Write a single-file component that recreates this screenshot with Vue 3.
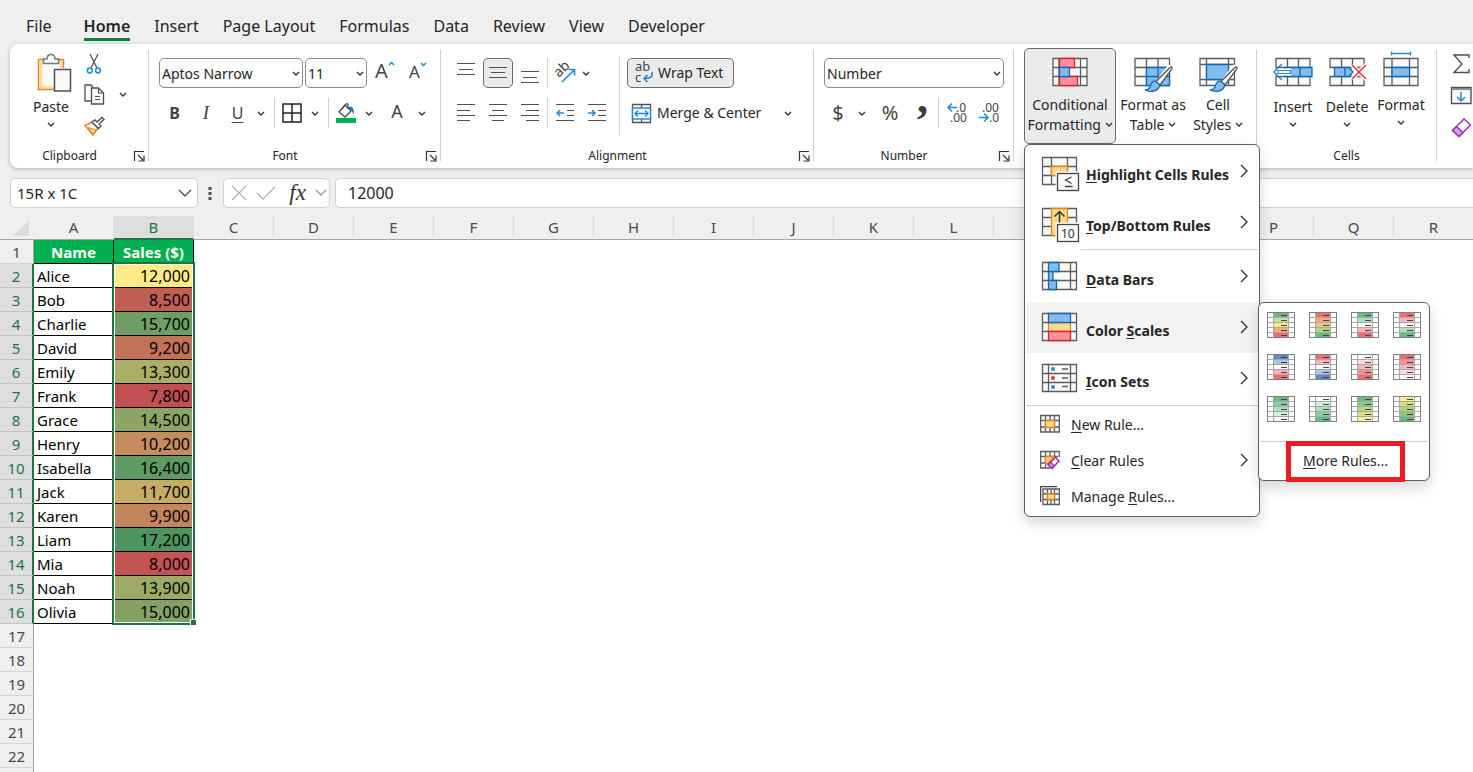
<script setup>
import { ref } from 'vue'

const tabs = ['File', 'Home', 'Insert', 'Page Layout', 'Formulas', 'Data', 'Review', 'View', 'Developer']
const columns = 'ABCDEFGHIJKLMNOPQR'.split('')

const people = [
  ['Alice', '12,000', '#ffeb84'],
  ['Bob', '8,500', '#c25f55'],
  ['Charlie', '15,700', '#6e9e64'],
  ['David', '9,200', '#c27259'],
  ['Emily', '13,300', '#a9af65'],
  ['Frank', '7,800', '#c14f53'],
  ['Grace', '14,500', '#8ca564'],
  ['Henry', '10,200', '#c38d5e'],
  ['Isabella', '16,400', '#5f9963'],
  ['Jack', '11,700', '#c5ad64'],
  ['Karen', '9,900', '#c2855c'],
  ['Liam', '17,200', '#4d9461'],
  ['Mia', '8,000', '#c35453'],
  ['Noah', '13,900', '#9caa64'],
  ['Olivia', '15,000', '#82a163']
]
const emptyRows = [17, 18, 19, 20, 21, 22, 23]

const gyr = ['#63be7b', '#cbe2a3', '#ffeb84', '#fca777', '#f8696b']
const ryg = ['#f8696b', '#fca777', '#eec67b', '#b1d580', '#63be7b']
const gwr = ['#63be7b', '#b1debd', '#ffffff', '#fbb4b5', '#f8696b']
const bwr = ['#5a8ac6', '#acc4e3', '#ffffff', '#fbb4b5', '#f8696b']
const wr = ['#ffffff', '#fddadb', '#fbb4b5', '#fa8f90', '#f8696b']
const gw = ['#63be7b', '#8acea0', '#b1debd', '#d8efde', '#ffffff']
const gy = ['#63be7b', '#8ac97d', '#b1d580', '#d8e082', '#ffeb94']
const flip = (list) => [...list].reverse()
const scales = [
  { name: 'Green - Yellow - Red', fills: gyr },
  { name: 'Red - Yellow - Green', fills: ryg },
  { name: 'Green - White - Red', fills: gwr },
  { name: 'Red - White - Green', fills: flip(gwr) },
  { name: 'Blue - White - Red', fills: bwr },
  { name: 'Red - White - Blue', fills: flip(bwr) },
  { name: 'White - Red', fills: wr },
  { name: 'Red - White', fills: flip(wr) },
  { name: 'Green - White', fills: gw },
  { name: 'White - Green', fills: flip(gw) },
  { name: 'Green - Yellow', fills: gy },
  { name: 'Yellow - Green', fills: flip(gy) }
]

const nameBox = ref('15R x 1C')
const formula = ref('12000')
</script>

<template>
  <div class="app">
    <nav class="tabs">
      <button v-for="t in tabs" :key="t" class="tab" :class="{ active: t === 'Home', file: t === 'File' }">{{ t }}</button>
    </nav>

    <div class="ribbon">
      <section class="group clipboard">
        <div class="body">
          <button class="big paste">
            <svg width="42" height="42" viewBox="-6 0 42 42" fill="none">
              <path d="M3 10H27V18H18V39H3Z" fill="#fafafa" />
              <path d="M5 11.500H25V18M5 11V37.500H18" stroke="#fbdc9a" stroke-width="2.500" />
              <path d="M8 9.500H2.500V39.500H18M22 9.500H27.500V18" stroke="#e8821a" stroke-width="1.500" />
              <path d="M7.500 13.500V9H11C11 3 19 3 19 9H22.500V13.500Z" fill="#fafafa" stroke="#7a7a7a" stroke-width="1.500" />
              <path d="M18.500 19.500H34.500V41H18.500Z" fill="#fafafa" stroke="#505050" stroke-width="1.500" />
            </svg>
            <span>Paste</span>
            <svg class="chev" viewBox="0 0 8 5"><path d="M1 1L4 4L7 1" /></svg>
          </button>
          <div class="clip-tools">
            <button class="tool" aria-label="Cut">
              <svg width="20" height="20" viewBox="0 0 20 20" fill="none">
                <path d="M6 0L13 14M14 0L7 14" stroke="#505050" stroke-width="1.300" />
                <circle cx="5.800" cy="16.500" r="2.400" stroke="#1f8ad2" stroke-width="1.500" />
                <circle cx="14" cy="16.500" r="2.400" stroke="#1f8ad2" stroke-width="1.500" />
              </svg>
            </button>
            <span></span>
            <button class="tool" aria-label="Copy">
              <svg width="21" height="21" viewBox="0 0 21 21" fill="#fafafa" stroke="#505050" stroke-width="1.300">
                <path d="M7 17H1V1H7L9 3" />
                <path d="M7.500 4H14.500L19.500 9V20H7.500Z" />
                <path d="M14.500 4V9H19.500M11 12.500H16M11 15.500H16" fill="none" stroke-width="1.200" />
              </svg>
            </button>
            <button class="tool" aria-label="Copy options"><svg class="chev" viewBox="0 0 8 5"><path d="M1 1L4 4L7 1" /></svg></button>
            <button class="tool" aria-label="Format painter">
              <svg width="21" height="20" viewBox="0 0 21 20" fill="none">
                <path d="M8 6L1 9.500L9 19L14 12Z" fill="#fff" stroke="#e8821a" stroke-width="1.500" />
                <path d="M4 11.500L12 14L9 18.500Z" fill="#fbd58a" stroke="#e8821a" />
                <path d="M8 6L11 4L13 6L18 1.500L20 3.500L15 8L17 10L14.500 12.500Z" fill="#fff" stroke="#505050" stroke-width="1.400" />
              </svg>
            </button>
          </div>
        </div>
        <footer><span>Clipboard</span><button class="launch" aria-label="Clipboard settings"><svg viewBox="0 0 11 11"><path d="M.5 10V.5H10M4 4L9 9M10 4.500V10H4.500" /></svg></button></footer>
      </section>
      <i class="rule"></i>

      <section class="group font">
        <div class="rows">
          <div class="row">
            <label class="combo family"><select aria-label="Font"><option>Aptos Narrow</option></select><svg class="chev" viewBox="0 0 8 5"><path d="M1 1L4 4L7 1" /></svg></label>
            <label class="combo size"><select aria-label="Font size"><option>11</option></select><svg class="chev" viewBox="0 0 8 5"><path d="M1 1L4 4L7 1" /></svg></label>
            <button class="tool wide" aria-label="Increase font size">
              <svg width="22" height="26" viewBox="0 -2 22 26"><text x="0" y="18" font-size="20" fill="#444">A</text><path d="M14 5L16.500 2.500L19 5" fill="none" stroke="#1f8ad2" stroke-width="1.500" /></svg>
            </button>
            <button class="tool wide" aria-label="Decrease font size">
              <svg width="22" height="26" viewBox="0 -2 22 26"><text x="2" y="18" font-size="17" fill="#444">A</text><path d="M14 3L16.500 5.500L19 3" fill="none" stroke="#1f8ad2" stroke-width="1.500" /></svg>
            </button>
          </div>
          <div class="row format">
            <button class="tool bold">B</button>
            <button class="tool italic">I</button>
            <button class="tool under">U</button>
            <button class="tool" aria-label="Underline options"><svg class="chev" viewBox="0 0 8 5"><path d="M1 1L4 4L7 1" /></svg></button>
            <i class="rule"></i>
            <button class="tool" aria-label="Borders"><svg width="20" height="20" viewBox="0 0 20 20"><path d="M1 1H19V19H1ZM10 1V19M1 10H19" fill="none" stroke="#222" stroke-width="1.500" /></svg></button>
            <button class="tool" aria-label="Border options"><svg class="chev" viewBox="0 0 8 5"><path d="M1 1L4 4L7 1" /></svg></button>
            <i class="rule"></i>
            <button class="tool" aria-label="Fill color">
              <svg width="20" height="22" viewBox="0 0 20 22" fill="none">
                <path d="M9 3L15 9L9 15L3 10Z" stroke="#505050" stroke-width="1.400" fill="#fff" />
                <path d="M6 7L10 2C11 1 12 2 12 3V7" stroke="#505050" stroke-width="1.300" />
                <path d="M13 5C17 4 18 8 18 12C16 10 16 8 13 7Z" fill="#1b6fb8" />
                <rect y="16" width="20" height="5" fill="#00b050" />
              </svg>
            </button>
            <button class="tool" aria-label="Fill options"><svg class="chev" viewBox="0 0 8 5"><path d="M1 1L4 4L7 1" /></svg></button>
            <button class="tool letter">A</button>
            <button class="tool" aria-label="Font color options"><svg class="chev" viewBox="0 0 8 5"><path d="M1 1L4 4L7 1" /></svg></button>
          </div>
        </div>
        <footer><span>Font</span><button class="launch" aria-label="Font settings"><svg viewBox="0 0 11 11"><path d="M.5 10V.5H10M4 4L9 9M10 4.500V10H4.500" /></svg></button></footer>
      </section>
      <i class="rule"></i>

      <section class="group alignment">
        <div class="body align-body">
          <div class="rows">
            <div class="row aligns">
              <button class="tool" aria-label="Top align"><svg class="lines" viewBox="0 0 18 28"><path d="M0 4.500H18M2 10.500H16M0 15.500H18" /></svg></button>
              <button class="tool on" aria-label="Middle align"><svg class="lines" viewBox="0 0 18 28"><path d="M0 8.500H18M2 13.500H16M0 18.500H18" /></svg></button>
              <button class="tool" aria-label="Bottom align"><svg class="lines" viewBox="0 0 18 28"><path d="M0 12.500H18M2 18.500H16M0 23.500H18" /></svg></button>
              <i class="rule"></i>
              <button class="tool" aria-label="Orientation">
                <svg width="22" height="22" viewBox="0 0 22 22"><text x="0" y="0" font-size="14" fill="#444" transform="translate(5 16) rotate(-45)">ab</text><path d="M8 20L20 8M14.500 7.500H20.500V13.500" fill="none" stroke="#1f8ad2" stroke-width="1.600" /></svg>
              </button>
              <button class="tool start" aria-label="Orientation options"><svg class="chev" viewBox="0 0 8 5"><path d="M1 1L4 4L7 1" /></svg></button>
            </div>
            <div class="row aligns">
              <button class="tool" aria-label="Align left"><svg class="lines" viewBox="0 0 18 28"><path d="M0 5.500H18M0 11.500H13M0 16.500H18M0 21.500H13" /></svg></button>
              <button class="tool" aria-label="Center"><svg class="lines" viewBox="0 0 18 28"><path d="M0 5.500H18M3 11.500H15M0 16.500H18M3 21.500H15" /></svg></button>
              <button class="tool" aria-label="Align right"><svg class="lines" viewBox="0 0 18 28"><path d="M0 5.500H18M5 11.500H18M0 16.500H18M5 21.500H18" /></svg></button>
              <i class="rule"></i>
              <button class="tool" aria-label="Decrease indent"><svg class="lines" viewBox="0 0 18 28"><path d="M0 5.500H18M11 11.500H18M11 16.500H18M0 21.500H18" /><path class="blue" d="M8 14H1M4 11L1 14L4 17" /></svg></button>
              <button class="tool" aria-label="Increase indent"><svg class="lines" viewBox="0 0 18 28"><path d="M0 5.500H18M10 11.500H18M10 16.500H18M0 21.500H18" /><path class="blue" d="M0 14H7M4 11L7 14L4 17" /></svg></button>
            </div>
          </div>
          <i class="rule tall"></i>
          <div class="rows merge-rows">
            <button class="wrap">
              <svg width="18" height="26" viewBox="0 -2 18 26"><text x="0" y="9" font-size="13" fill="#444">ab</text><text x="0" y="20" font-size="13" fill="#444">c</text><path d="M17 10C18 15 15 16.500 9 16.500M12.500 13L9 16.500L12.500 20" fill="none" stroke="#1f8ad2" stroke-width="1.700" /></svg>
              Wrap Text
            </button>
            <div class="row">
              <button class="merge">
                <svg width="19" height="19" viewBox="0 0 19 19" fill="none" stroke="#505050"><path d="M.5 .5H18.500V18.500H.5ZM9.500 .5V4M9.500 15V18.500" stroke-width="1.300" /><path d="M.5 4H18.500V15H.5Z" stroke="#1f8ad2" fill="#f5faff" stroke-width="1.400" /><path d="M3 9.500H16M6 6.500L3 9.500L6 12.500M13 6.500L16 9.500L13 12.500" stroke="#1f8ad2" stroke-width="1.400" /></svg>
                Merge &amp; Center
              </button>
              <button class="tool merge-more" aria-label="Merge options"><svg class="chev" viewBox="0 0 8 5"><path d="M1 1L4 4L7 1" /></svg></button>
            </div>
          </div>
        </div>
        <footer><span>Alignment</span><button class="launch" aria-label="Alignment settings"><svg viewBox="0 0 11 11"><path d="M.5 10V.5H10M4 4L9 9M10 4.500V10H4.500" /></svg></button></footer>
      </section>
      <i class="rule"></i>

      <section class="group number">
        <div class="rows">
          <label class="combo kind"><select aria-label="Number format"><option>Number</option></select><svg class="chev" viewBox="0 0 8 5"><path d="M1 1L4 4L7 1" /></svg></label>
          <div class="row numbers">
            <button class="tool sign">$</button>
            <button class="tool" aria-label="Currency options"><svg class="chev" viewBox="0 0 8 5"><path d="M1 1L4 4L7 1" /></svg></button>
            <button class="tool sign">%</button>
            <button class="tool" aria-label="Comma style"><svg width="16" height="24" viewBox="0 0 16 24"><text class="comma" x="3" y="12" font-size="44" fill="#3b3b3b">,</text></svg></button>
            <i class="rule"></i>
            <button class="tool" aria-label="Increase decimal"><svg width="20" height="24" viewBox="0 -1 20 24"><text x="9" y="10" font-size="12" fill="#444">.0</text><text x="3" y="20" font-size="12" fill="#444">.00</text><path d="M10 5.500H1M5 1.500L1 5.500L5 9.500" fill="none" stroke="#1f8ad2" stroke-width="1.500" /></svg></button>
            <button class="tool" aria-label="Decrease decimal"><svg width="20" height="24" viewBox="0 -1 20 24"><text x="3" y="10" font-size="12" fill="#444">.00</text><text x="10" y="20" font-size="12" fill="#444">.0</text><path d="M0 15.500H9M5 11.500L9 15.500L5 19.500" fill="none" stroke="#1f8ad2" stroke-width="1.500" /></svg></button>
          </div>
        </div>
        <footer><span>Number</span><button class="launch" aria-label="Number settings"><svg viewBox="0 0 11 11"><path d="M.5 10V.5H10M4 4L9 9M10 4.500V10H4.500" /></svg></button></footer>
      </section>
      <i class="rule"></i>

      <section class="group styles">
        <div class="body styles-body">
          <div class="menu-anchor">
            <button class="big cond">
              <svg width="38" height="42" viewBox="0 0 38 42" fill="none" stroke="#5c5c5c" stroke-width="1.300">
                <path d="M2 8.500H36V35.500H2ZM8 8.500V35.500M29.500 8.500V35.500M2 17.500H36M2 26.500H36M23 8V17" fill="#fafafa" />
                <path d="M8.500 8.500H23.500V17.500H8.500ZM8.500 26.500H26.500V35.500H8.500Z" fill="#ff9199" stroke="#d9252b" />
                <path d="M8.500 17.500H18.500V26.500H8.500Z" fill="#83bcec" stroke="#1267b4" />
              </svg>
              <span>Conditional<br />Formatting <svg class="chev" viewBox="0 0 8 5"><path d="M1 1L4 4L7 1" /></svg></span>
            </button>

            <div class="menu">
              <button class="item large">
                <svg width="40" height="38" viewBox="0 0 40 38" fill="none" stroke="#5c5c5c" stroke-width="1.300">
                  <path d="M1.500 4.500H35.500V31.500H1.500ZM10.500 4.500V31.500M26.500 4.500V31.500M1.500 13.500H35.500M1.500 22.500H35.500" fill="#fafafa" />
                  <path d="M10.500 13.500H26.500V22.500H10.500Z" fill="#fbd98d" stroke="#e8821a" />
                  <rect x="14.500" y="18.500" width="24" height="20" fill="#fff" stroke="none" />
                  <rect x="16.500" y="20.500" width="21" height="17" fill="#fafafa" stroke="#444" />
                  <path d="M30.500 24L24.500 27L30.500 30.500M24 33.500H31.500" stroke="#444" />
                </svg>
                <span><u>H</u>ighlight Cells Rules</span><svg class="more" viewBox="0 0 8 14"><path d="M1 1L7 7L1 13" /></svg>
              </button>
              <button class="item large">
                <svg width="40" height="38" viewBox="0 0 40 38" fill="none" stroke="#5c5c5c" stroke-width="1.300">
                  <path d="M1.500 4.500H35.500V31.500H1.500ZM1.500 13.500H35.500M1.500 22.500H35.500" fill="#fafafa" />
                  <path d="M10.500 4.500H26.500V31.500H10.500Z" fill="#fbd98d" stroke="#e8821a" />
                  <path d="M18.500 20V7.500M13.500 12.500L18.500 7.500L23.500 12.500" stroke="#333" stroke-width="1.500" />
                  <rect x="14.500" y="18.500" width="24" height="20" fill="#fff" stroke="none" />
                  <rect x="16.500" y="20.500" width="21" height="17" fill="#fafafa" stroke="#444" />
                  <text class="ten" x="20" y="34" font-size="12" fill="#333" stroke="none">10</text>
                </svg>
                <span><u>T</u>op/Bottom Rules</span><svg class="more" viewBox="0 0 8 14"><path d="M1 1L7 7L1 13" /></svg>
              </button>
              <hr class="inset" />
              <button class="item large">
                <svg width="40" height="38" viewBox="0 0 40 38" fill="none" stroke="#5c5c5c" stroke-width="1.300">
                  <path d="M1.500 4.500H35.500V31.500H1.500ZM29.500 4.500V31.500M1.500 13.500H35.500M1.500 22.500H35.500" fill="#fafafa" />
                  <path d="M7.500 4.500H18V13.500H7.500ZM7.500 13.500H12V22.500H7.500ZM7.500 22.500H15.500V31.500H7.500Z" fill="#83bcec" stroke="#1267b4" />
                </svg>
                <span><u>D</u>ata Bars</span><svg class="more" viewBox="0 0 8 14"><path d="M1 1L7 7L1 13" /></svg>
              </button>
              <div class="sub-anchor">
                <button class="item large hover">
                  <svg width="40" height="38" viewBox="0 0 40 38" fill="none" stroke="#5c5c5c" stroke-width="1.300">
                    <path d="M1.500 4.500H35.500V31.500H1.500ZM1.500 13.500H35.500M1.500 22.500H35.500" fill="#fafafa" />
                    <path d="M7.500 13.500H29.500V22.500H7.500Z" fill="#fbd98d" stroke="#e8821a" />
                    <path d="M7.500 4.500H29.500V13.500H7.500Z" fill="#83bcec" stroke="#1267b4" />
                    <path d="M7.500 22.500H29.500V31.500H7.500Z" fill="#ff9199" stroke="#d9252b" />
                  </svg>
                  <span>Color <u>S</u>cales</span><svg class="more" viewBox="0 0 8 14"><path d="M1 1L7 7L1 13" /></svg>
                </button>
                <div class="submenu">
                  <div class="scales">
                    <button v-for="s in scales" :key="s.name" :aria-label="s.name">
                      <svg width="28" height="26" viewBox="0 0 28 26">
                        <rect x=".5" y=".5" width="27" height="25" fill="#fff" stroke="#808080" />
                        <g v-for="(f, i) in s.fills" :key="i">
                          <rect x="6" :y="1 + i * 5" width="16" height="4" :fill="f" />
                          <rect x="14" :y="3 + i * 5" width="6" height="1" fill="#444" />
                          <rect v-if="i" x="1" :y="i * 5" width="26" height="1" fill="#a8a8a8" />
                        </g>
                        <path d="M6.500 1V25M21.500 1V25" stroke="#a8a8a8" />
                      </svg>
                    </button>
                  </div>
                  <hr />
                  <button class="more-rules"><span><u>M</u>ore Rules...</span></button>
                </div>
              </div>
              <button class="item large">
                <svg width="40" height="38" viewBox="0 0 40 38" fill="none" stroke="#5c5c5c" stroke-width="1.300">
                  <path d="M1.500 4.500H35.500V31.500H1.500ZM7.500 4.500V31.500M29.500 4.500V31.500M1.500 13.500H35.500M1.500 22.500H35.500" fill="#fafafa" />
                  <path d="M21 9H27M21 18H27M21 26.500H27" />
                  <g stroke="none"><circle cx="12" cy="9" r="2" fill="#1f8ad2" /><circle cx="12" cy="18" r="2" fill="#e8343b" /><circle cx="12" cy="27" r="2" fill="#1f8ad2" /></g>
                </svg>
                <span><u>I</u>con Sets</span><svg class="more" viewBox="0 0 8 14"><path d="M1 1L7 7L1 13" /></svg>
              </button>
              <hr />
              <button class="item">
                <svg class="small-icon" width="20" height="20" viewBox="0 0 20 20" fill="none" stroke="#5c5c5c" stroke-width="1.300">
                  <path d="M.7 1.500H19.300V18H.7ZM5.500 1.500V18M14.500 1.500V18M.7 6.500H19.300M.7 13H19.300M10 1.500V6M10 13V18" fill="#fff" />
                  <path d="M5.500 6.500H14.500V13.500H5.500Z" fill="#fbd98d" stroke="#e8821a" />
                </svg>
                <span><u>N</u>ew Rule...</span>
              </button>
              <button class="item">
                <svg class="small-icon" width="20" height="20" viewBox="0 0 20 20" fill="none" stroke="#5c5c5c" stroke-width="1.300">
                  <path d="M10 18H.7V1.500H19.300V7M5.500 1.500V18M14.500 1.500V7M.7 6.500H18M.7 13H8M10 1.500V6" />
                  <path d="M5.500 6.500H14L8 13.500H5.500Z" fill="#fbd98d" stroke="#e8821a" />
                  <path d="M15.500 7.500L19 11L12 18.500L8 14.500Z" fill="#fff" stroke="#9b2fae" stroke-width="1.500" /><path d="M10.500 12L14.500 16L12 18.500L8 14.500Z" fill="#d59be0" stroke="#9b2fae" />
                </svg>
                <span><u>C</u>lear Rules</span><svg class="more" viewBox="0 0 8 14"><path d="M1 1L7 7L1 13" /></svg>
              </button>
              <button class="item">
                <svg class="small-icon" width="20" height="20" viewBox="0 0 20 20" fill="none" stroke="#5c5c5c" stroke-width="1.300">
                  <path d="M.7 16V.7H17" stroke="#444" />
                  <path d="M3 3H19.300V18.500H3ZM7.500 3V18.500M14.500 3V18.500M3 8H19.300M3 13.500H19.300M11 3V8M11 13.500V18.500" fill="#fff" />
                  <path d="M7.500 8H14.500V13.500H7.500Z" fill="#fbd98d" stroke="#e8821a" />
                </svg>
                <span>Manage <u>R</u>ules...</span>
              </button>
            </div>
          </div>
          <button class="big as-table">
            <svg width="40" height="42" viewBox="0 0 40 42" fill="none" stroke="#5c5c5c" stroke-width="1.300">
              <path d="M2 8.500H36.500V35.500H2ZM13.500 8.500V35.500M25 8.500V35.500M2 17.500H36.500M2 26.500H36.500" fill="#fafafa" />
              <path d="M13.500 17.500H36.500V35.500H13.500ZM25 17.500V35.500M13.500 26.500H36.500" fill="#83bcec" stroke="#1267b4" />
              <path d="M38 16L25 33" stroke="#fff" stroke-width="6" />
              <path d="M37 17.500C39 16 39.500 18 38.500 19.500L27 35L23 31.500Z" fill="#fff" stroke="#505050" />
              <path d="M23 31.500C19 30 18 34 17 37C16 39 14 40 12 40C17 42.500 25 42 27 35Z" fill="#83bcec" stroke="#1267b4" />
            </svg>
            <span>Format as<br />Table <svg class="chev" viewBox="0 0 8 5"><path d="M1 1L4 4L7 1" /></svg></span>
          </button>
          <button class="big cell-styles">
            <svg width="40" height="42" viewBox="0 0 40 42" fill="none" stroke="#5c5c5c" stroke-width="1.300">
              <path d="M2 8.500H36.500V35.500H2ZM8.500 8.500V35.500M30.500 8.500V35.500M2 14.500H36.500M2 29.500H36.500" fill="#fafafa" />
              <path d="M8.500 14.500H30.500V29.500H8.500Z" fill="#83bcec" stroke="#1267b4" />
              <path d="M38 16L25 33" stroke="#fff" stroke-width="6" />
              <path d="M37 17.500C39 16 39.500 18 38.500 19.500L27 35L23 31.500Z" fill="#fff" stroke="#505050" />
              <path d="M23 31.500C19 30 18 34 17 37C16 39 14 40 12 40C17 42.500 25 42 27 35Z" fill="#83bcec" stroke="#1267b4" />
            </svg>
            <span>Cell<br />Styles <svg class="chev" viewBox="0 0 8 5"><path d="M1 1L4 4L7 1" /></svg></span>
          </button>
        </div>
      </section>
      <i class="rule"></i>

      <section class="group cells">
        <div class="body cells-body">
          <button class="big split">
            <svg width="40" height="42" viewBox="0 0 40 42" fill="none" stroke="#5c5c5c" stroke-width="1.300">
              <path d="M3 8.500H37V35.500H3ZM14.500 8.500V35.500M25.500 8.500V35.500M3 17.500H37M3 26.500H37" fill="#fafafa" />
              <path d="M12 17.500H39V26.500H12ZM27 17.500V26.500" fill="#83bcec" stroke="#1267b4" />
              <path d="M18 22H1" stroke="#fff" stroke-width="7" />
              <path d="M17.500 20.500H5V23.500H17.500Z" fill="#fff" stroke="#1f8ad2" stroke-width="1.200" /><path d="M9 14L1 22L9 30" stroke="#1f8ad2" stroke-width="1.500" />
            </svg>
            <span>Insert</span><svg class="chev" viewBox="0 0 8 5"><path d="M1 1L4 4L7 1" /></svg>
          </button>
          <button class="big split">
            <svg width="40" height="42" viewBox="0 0 40 42" fill="none" stroke="#5c5c5c" stroke-width="1.300">
              <path d="M3 17.500V8.500H37V17.500ZM3 26.500V35.500H37V26.500ZM14.500 8.500V17M25.500 8.500V17M14.500 27V35M25.500 27V35" fill="#fafafa" />
              <path d="M7.500 17.500H22L26 22L22 26.500H7.500ZM18 17.500V26.500" fill="#83bcec" stroke="#1267b4" />
              <path d="M25 15L39 29M39 15L25 29" stroke="#fff" stroke-width="4" /><path d="M25 15L39 29M39 15L25 29" stroke="#e8343b" stroke-width="1.500" />
            </svg>
            <span>Delete</span><svg class="chev" viewBox="0 0 8 5"><path d="M1 1L4 4L7 1" /></svg>
          </button>
          <button class="big">
            <svg width="40" height="42" viewBox="0 0 40 42" fill="none" stroke="#5c5c5c" stroke-width="1.300">
              <path d="M3 8.500H37V35.500H3ZM11 8.500V35.500M28.500 8.500V35.500M3 17.500H37M3 26.500H37" fill="#fafafa" />
              <path d="M11 17.500H28.500V26.500H11Z" fill="#83bcec" stroke="#1267b4" />
              <path d="M10.500 3.500H29.500M10.500 1.500V5.500M29.500 1.500V5.500" stroke="#1f8ad2" />
            </svg>
            <span>Format</span><svg class="chev" viewBox="0 0 8 5"><path d="M1 1L4 4L7 1" /></svg>
          </button>
        </div>
        <footer><span>Cells</span></footer>
      </section>
      <i class="rule"></i>

      <section class="group editing">
        <button class="tool" aria-label="AutoSum"><svg width="22" height="22" viewBox="0 0 22 22"><path d="M19 5V2H4L12 11L4 19.500H19V16" fill="none" stroke="#505050" stroke-width="1.400" /></svg></button>
        <button class="tool" aria-label="Fill"><svg width="22" height="22" viewBox="0 0 22 22" fill="none"><path d="M1.500 2.500H21V18.500H1.500Z" fill="#fafafa" stroke="#505050" stroke-width="1.400" /><path d="M1.500 4H21" stroke="#8a8a8a" stroke-width="2" /><path d="M11 7V16M7 12L11 16L15 12" stroke="#1f8ad2" stroke-width="1.500" /></svg></button>
        <button class="tool" aria-label="Clear"><svg width="22" height="22" viewBox="0 0 22 22" stroke="#9b2fae" stroke-width="1.400"><path d="M14 2L20.500 8L9 19.500L2.500 13.500Z" fill="#fff" /><path d="M6.500 9.500L13 15.500L9 19.500L2.500 13.500Z" fill="#d59be0" /></svg></button>
      </section>
    </div>

    <div class="formula-bar">
      <div class="field name-box">
        <input v-model="nameBox" aria-label="Name box" />
        <button class="tool" aria-label="Names"><svg width="14" height="8" viewBox="0 0 14 8"><path d="M1 1L7 7L13 1" fill="none" stroke="#505050" stroke-width="1.400" /></svg></button>
      </div>
      <svg class="dots" width="4" height="14" viewBox="0 0 4 14"><path d="M.5 1H3.500V4H.5ZM.5 6H3.500V9H.5ZM.5 11H3.500V14H.5Z" fill="#505050" /></svg>
      <div class="field entry">
        <button class="tool" aria-label="Cancel"><svg width="16" height="16" viewBox="0 0 16 16"><path d="M1 1L15 15M15 1L1 15" fill="none" stroke="#b4b4b4" stroke-width="1.400" /></svg></button>
        <button class="tool" aria-label="Enter"><svg width="20" height="14" viewBox="0 0 20 14"><path d="M1 7L7 13L19 1" fill="none" stroke="#b4b4b4" stroke-width="1.400" /></svg></button>
        <button class="tool fx">fx</button>
        <button class="tool" aria-label="Functions"><svg width="12" height="8" viewBox="0 0 12 8"><path d="M1 1L6 6L11 1" fill="none" stroke="#999" stroke-width="1.300" /></svg></button>
      </div>
      <input v-model="formula" class="field formula" aria-label="Formula" />
    </div>

    <main class="sheet">
      <table>
        <colgroup><col class="c-head" /><col v-for="c in columns" :key="c" class="c-cell" /></colgroup>
        <thead>
          <tr>
            <th class="corner"><svg width="16" height="16" viewBox="0 0 16 16"><path d="M16 0V16H0Z" fill="#dcdcdc" /></svg></th>
            <th v-for="c in columns" :key="c" :class="{ picked: c === 'B' }">{{ c }}</th>
          </tr>
        </thead>
        <tbody>
          <tr>
            <th>1</th>
            <td class="title">Name</td>
            <td class="title">Sales ($)</td>
          </tr>
          <tr v-for="(p, i) in people" :key="p[0]">
            <th class="picked">{{ i + 2 }}</th>
            <td class="name">{{ p[0] }}</td>
            <td class="amount" :style="{ backgroundColor: p[2] }">{{ p[1] }}</td>
          </tr>
          <tr v-for="n in emptyRows" :key="n"><th>{{ n }}</th></tr>
        </tbody>
      </table>
      <div class="selection"><i></i></div>
    </main>
  </div>
</template>

<style>
html, body { margin: 0; background: #efefef; }
</style>

<style scoped>
.app {
  height: 100vh;
  overflow: hidden;
  display: flex;
  flex-direction: column;
  background: #efefef;
  color: #262626;
  font: 14px/20px "Noto Sans", "Open Sans", sans-serif;
}
.app * { box-sizing: border-box; }
button { border: 0; padding: 0; margin: 0; background: none; color: inherit; font: inherit; }
input, select { font: inherit; color: inherit; }
svg { display: block; flex: none; overflow: visible; }
u { text-underline-offset: 2px; text-decoration-thickness: 1px; }

.tabs { display: flex; gap: 24px; height: 44px; padding-left: 26px; flex: none; }
.tab { font-size: 16px; line-height: 24px; padding-top: 14px; height: 41px; white-space: nowrap; border-bottom: 3px solid transparent; }
.tab.file { margin-right: 8px; }
.tab.active { font-weight: 600; border-color: #107c41; }

.ribbon {
  display: flex;
  flex: none;
  margin-left: 10px;
  padding: 4px 0;
  background: #fff;
  border-radius: 8px 0 0 8px;
  box-shadow: 0 1px 4px rgba(0, 0, 0, 0.25);
  position: relative;
  z-index: 2;
}
.rule { flex: none; width: 1px; background: #d0d0d0; margin: 2px 0 3px; }
.group { flex: none; display: flex; flex-direction: column; justify-content: space-between; height: 116px; }
.clipboard { width: 138px; }
.font { width: 291px; }
.alignment { width: 372px; }
.number { width: 199px; }
.styles { width: 242px; }
.cells { width: 179px; }
footer { display: flex; align-items: center; height: 16px; font-size: 12px; line-height: 16px; }
footer span { flex: 1; text-align: center; }
.launch { width: 19px; height: 16px; padding-left: 5px; }
.launch svg { width: 11px; height: 11px; fill: none; stroke: #333; stroke-width: 1.2; }

.body { display: flex; }
.chev { width: 8px; height: 5px; fill: none; stroke: #333; stroke-width: 1.4; }
.tool { display: flex; align-items: center; justify-content: center; height: 30px; }
.start { justify-content: flex-start; }
.big { display: flex; flex-direction: column; align-items: center; padding-top: 2px; white-space: nowrap; }
.big span { margin-top: 3px; text-align: center; }
.big span .chev { display: inline-block; vertical-align: 3px; }
.big > .chev { margin-top: 5px; }
.split span, .paste span { margin-top: 5px; }
.paste { width: 58px; margin-left: 12px; }
.clip-tools { display: grid; grid-template-columns: 28px 30px; align-content: start; }
.clip-tools .tool { height: 31px; }

.rows { display: flex; flex-direction: column; gap: 10px; padding: 10px 0 0 10px; }
.row { display: flex; align-items: center; }
.row .rule { height: 30px; margin: 0; }
.combo { position: relative; display: block; height: 30px; }
.combo select {
  width: 100%;
  height: 30px;
  appearance: none;
  border: 1px solid #8a8a8a;
  border-radius: 5px;
  background: #fff;
  padding: 1px 2px 0;
  outline: 0;
}
.combo .chev { position: absolute; right: 3px; top: 13px; pointer-events: none; }
.family { width: 144px; margin-right: 2px; }
.size { width: 62px; margin-right: 3px; }
.kind { width: 180px; }
.wide { width: 32px; padding-bottom: 4px; }
.format { display: grid; grid-template-columns: 31px 32px 31px 16px 10px 25px 22px 4px 32px 14px 42px 8px; }
.format .rule, .aligns .rule, .numbers .rule { justify-self: center; }
.format .tool { font-size: 16px; color: #444; }
.format .bold { font-weight: 700; }
.format .italic { font-family: "Liberation Serif", serif; font-style: italic; font-size: 19px; }
.under { text-decoration: underline; text-underline-offset: 3px; }
.format .letter { font-size: 18px; padding-bottom: 4px; }

.align-body .rows:first-child { padding-left: 9px; }
.aligns { display: grid; grid-template-columns: 32px 32px 32px 3px 32px 32px; }
.aligns .tool { width: 30px; justify-self: center; }
.aligns .on { border: 1px solid #6a6a6a; border-radius: 5px; background: #ebebeb; }
.lines { width: 18px; height: 28px; fill: none; stroke: #505050; stroke-width: 1; }
.lines .blue { stroke: #1f8ad2; stroke-width: 1.5; }
.tall { height: 78px; margin: 9px 0 0 6px; }
.merge-rows { padding-left: 7px; }
.wrap { display: flex; align-items: center; gap: 5px; align-self: flex-start; height: 30px; padding: 0 10px 0 7px; border: 1px solid #6a6a6a; border-radius: 5px; background: #ebebeb; white-space: nowrap; }
.merge { display: flex; align-items: center; gap: 6px; height: 30px; padding-left: 5px; white-space: nowrap; }
.merge-more { width: 24px; margin-left: 15px; }

.numbers { display: grid; grid-template-columns: 28px 20px 36px 28px 5px 32px 32px; }
.sign { font-size: 20px; color: #444; }
.comma { font-family: "Liberation Serif", serif; font-weight: 700; }
.ten { font-weight: 400; }

.styles-body { padding-left: 10px; }
.menu-anchor { position: relative; }
.cond { width: 92px; height: 96px; padding-top: 1px; justify-content: flex-start; border: 1px solid #6a6a6a; border-radius: 5px; background: #ebebeb; }
.as-table { width: 74px; }
.cell-styles { width: 56px; }
.cells-body { padding-left: 9px; }
.cells-body .big { width: 54px; }
.editing { padding-left: 13px; justify-content: flex-start; }
.editing .tool { height: 32px; }

.menu {
  position: absolute;
  left: 0;
  top: 96px;
  width: 236px;
  padding: 1px;
  background: #fff;
  border: 1px solid #5f5f5f;
  border-radius: 6px;
  box-shadow: 0 6px 14px rgba(0, 0, 0, 0.16);
}
.item { display: flex; align-items: center; gap: 11px; width: 100%; height: 36px; padding: 0 10px 0 14px; text-align: left; white-space: nowrap; }
.item span { flex: 1; }
.item.large { height: 51px; padding-left: 15px; gap: 5px; font-weight: 700; }
.large span { padding-top: 6px; }
.hover { background: #f3f3f3; }
.more { width: 8px; height: 14px; margin-bottom: 2px; fill: none; stroke: #333; stroke-width: 1.4; }
.small-icon { margin-bottom: 2px; }
hr { border: 0; height: 1px; margin: 1px 0; background: #cdcdcd; }
hr.inset { margin-left: 55px; }
.sub-anchor { position: relative; }
.submenu {
  position: absolute;
  left: 232px;
  top: 0;
  width: 172px;
  background: #fff;
  border: 1px solid #5f5f5f;
  border-radius: 6px;
  box-shadow: 0 6px 14px rgba(0, 0, 0, 0.16);
}
.submenu hr { margin: 0 1px; }
.scales { display: grid; grid-template-columns: repeat(4, 28px); gap: 16px 14px; padding: 9px 8px 19px; }
.more-rules { display: block; width: 119px; height: 41px; margin: -1px 0 -2px 27px; padding-bottom: 2px; border: 5px solid #ed1c24; position: relative; white-space: nowrap; }

.formula-bar { display: flex; align-items: center; flex: none; margin: 10px 0 8px 10px; }
.field { height: 30px; background: #fff; border: 1px solid #d0d0d0; border-radius: 5px; display: flex; align-items: center; font-size: 15px; outline: 0; }
.name-box { width: 188px; }
.name-box input { flex: 1; min-width: 0; border: 0; padding: 0 0 0 6px; outline: 0; background: none; }
.name-box .tool { width: 24px; }
.dots { margin: 0 11px 0 10px; }
.entry { width: 107px; justify-content: space-between; padding: 0 2px 0 7px; }
.fx { font: italic 400 23px/28px "Liberation Serif", serif; color: #333; padding-left: 4px; }
.formula { flex: 1; min-width: 0; margin-left: 5px; padding: 0 12px; border-right: 0; border-radius: 5px 0 0 5px; font-size: 16px; }

.sheet { position: relative; flex: 1; background: #fff; overflow: hidden; }
table { table-layout: fixed; width: 1474px; border-collapse: separate; border-spacing: 0; }
.c-head { width: 34px; }
.c-cell { width: 80px; }
th, td { height: 24px; padding: 0; line-height: 23px; white-space: nowrap; }
th { font-weight: 400; font-size: 15px; color: #4a4a4a; background: #efefef; }
thead th { border-bottom: 1px solid #a6a6a6; border-right: 1px solid #dcdcdc; }
thead .corner { border-right-color: #efefef; padding-left: 13px; }
thead .picked { background: #dedede; color: #217346; border-bottom: 2px solid #217346; line-height: 22px; }
tbody th, tbody td { padding-top: 2px; line-height: 21px; }
tbody th { border-right: 1px solid #a6a6a6; border-bottom: 1px solid #d4d4d4; }
tbody th.picked { background: #dedede; color: #217346; border-right: 2px solid #217346; border-bottom-color: #c4c4c4; }
td { border-right: 1px solid #000; border-bottom: 1px solid #000; font-size: 15px; color: #000; }
.title { background: #00b050; color: #fff; font-weight: 700; text-align: center; }
.name { padding-left: 3px; }
.amount { font-size: 16px; text-align: right; padding-right: 3px; }
.selection { position: absolute; left: 112px; top: 46px; width: 83px; height: 363px; border: 2px solid #217346; box-shadow: inset 0 0 0 1px #fff; pointer-events: none; }
.selection i { position: absolute; right: -4px; bottom: -3px; width: 7px; height: 7px; background: #217346; border: 1px solid #fff; }
</style>
